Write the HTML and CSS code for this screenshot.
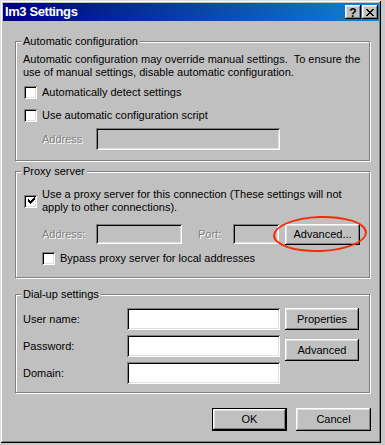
FILE: index.html
```html
<!DOCTYPE html>
<html>
<head>
<meta charset="utf-8">
<title>Im3 Settings</title>
<link rel="stylesheet" href="styles.css">
</head>
<body>
<div class="window">
  <div class="titlebar">
    <span class="title">Im3 Settings</span>
    <div class="title-buttons">
      <span class="tbtn help">?</span>
      <span class="tbtn close">
        <svg width="8" height="7" viewBox="0 0 8 7" shape-rendering="crispEdges"><path d="M0 0h2v1H0zM6 0h2v1H6zM1 1h2v1H1zM5 1h2v1H5zM2 2h4v1H2zM3 3h2v1H3zM2 4h4v1H2zM1 5h2v1H1zM5 5h2v1H5zM0 6h2v1H0zM6 6h2v1H6z" fill="#000"/></svg>
      </span>
    </div>
  </div>
  <div class="content">
    <div class="group g1">
      <span class="group-title">Automatic configuration</span>
      <p class="desc">Automatic configuration may override manual settings.&nbsp; To ensure the<br>use of manual settings, disable automatic configuration.</p>
      <div class="check-row r1"><span class="checkbox"></span><span>Automatically detect settings</span></div>
      <div class="check-row r2"><span class="checkbox"></span><span>Use automatic configuration script</span></div>
      <div class="addr-row">
        <span class="label disabled lbl-addr">Address</span>
        <span class="field off w-auto"></span>
      </div>
    </div>

    <div class="group g2">
      <span class="group-title">Proxy server</span>
      <div class="check-row two-line">
        <span class="checkbox checked"><svg width="9" height="9" viewBox="0 0 9 9" shape-rendering="crispEdges"><path d="M6 1h1v3H6zM5 2h1v3H5zM4 3h1v3H4zM3 4h1v3H3zM2 3h1v3H2zM1 2h1v3H1zM7 0h1v3H7z" fill="#000"/></svg></span>
        <span>Use a proxy server for this connection (These settings will not<br>apply to other connections).</span>
      </div>
      <div class="proxy-row">
        <span class="label disabled lbl-addr">Address:</span>
        <span class="field off w-proxy"></span>
        <span class="label disabled lbl-port">Port:</span>
        <span class="field off w-port"></span>
        <span class="ring-wrap">
          <span class="btn btn-adv">Advanced...</span>
          <span class="ring"></span>
        </span>
      </div>
      <div class="check-row bypass"><span class="checkbox"></span><span>Bypass proxy server for local addresses</span></div>
    </div>

    <div class="group g3">
      <span class="group-title">Dial-up settings</span>
      <div class="dial">
        <div class="dial-fields">
          <div class="dial-row"><span class="label lbl-dial">User name:</span><span class="field w-dial"></span></div>
          <div class="dial-row"><span class="label lbl-dial">Password:</span><span class="field w-dial"></span></div>
          <div class="dial-row"><span class="label lbl-dial">Domain:</span><span class="field w-dial"></span></div>
        </div>
        <div class="dial-buttons">
          <span class="btn btn-side">Properties</span>
          <span class="btn btn-side">Advanced</span>
        </div>
      </div>
    </div>

    <div class="footer">
      <span class="default-wrap"><span class="btn btn-ok">OK</span></span>
      <span class="btn btn-cancel">Cancel</span>
    </div>
  </div>
</div>
</body>
</html>
```

FILE: styles.css
```css
html, body {
  margin: 0;
  padding: 0;
}
body {
  background: #c8c8c8;
  font-family: "Liberation Sans", Arial, sans-serif;
  font-size: 11px;
  line-height: 13px;
  color: #000;
  width: 385px;
  height: 445px;
  overflow: hidden;
}
.window {
  box-sizing: border-box;
  width: 381px;
  height: 443px;
  background: #c0c0c0;
  padding: 3px 2px 3px 3px;
  box-shadow: inset 1px 1px #dfdfdf, inset -1px -1px #000, inset 2px 2px #fff, inset -2px -2px #808080;
}
.titlebar {
  height: 18px;
  box-sizing: border-box;
  padding: 0 1px 0 2px;
  display: flex;
  align-items: center;
  justify-content: space-between;
  background: linear-gradient(90deg, #000080 0%, #1084d0 100%);
}
.title {
  color: #fff;
  font-weight: bold;
  font-size: 13px;
  letter-spacing: -0.4px;
  line-height: 16px;
}
.title-buttons {
  display: flex;
  gap: 1px;
}
.tbtn {
  width: 16px;
  height: 14px;
  box-sizing: border-box;
  background: #c0c0c0;
  box-shadow: inset -1px -1px #000, inset 1px 1px #fff, inset -2px -2px #808080, inset 2px 2px #dfdfdf;
  display: flex;
  align-items: center;
  justify-content: center;
}
.help {
  font-weight: bold;
  font-size: 12px;
  line-height: 12px;
  padding-top: 1px;
}
.close svg {
  display: block;
  margin-left: -1px;
}
.content {
  padding: 20px 9px 0 12px;
  display: flex;
  flex-direction: column;
}
.group {
  position: relative;
  border: 1px solid #808080;
  box-shadow: inset 1px 1px #fff, 1px 1px #fff;
  padding: 0 7px;
}
.group-title {
  position: absolute;
  top: -7px;
  left: 5px;
  padding: 0 2px;
  background: #c0c0c0;
  line-height: 13px;
}
.g1 { padding-top: 11px; padding-bottom: 10px; }
.g2 { margin-top: 10px; padding-top: 16px; padding-bottom: 12px; }
.g3 { margin-top: 16px; padding-top: 13px; padding-bottom: 8px; }
.desc {
  margin: 0;
}
.check-row {
  display: flex;
  align-items: center;
  gap: 5px;
  height: 13px;
}
.check-row .checkbox { margin-left: 1px; }
.r1 { margin-top: 7px; }
.r2 { margin-top: 10px; }
.two-line { height: 26px; }
.checkbox {
  flex: none;
  width: 13px;
  height: 13px;
  box-sizing: border-box;
  background: #fff;
  box-shadow: inset 1px 1px #808080, inset -1px -1px #fff, inset 2px 2px #000, inset -2px -2px #dfdfdf;
  display: flex;
  align-items: center;
  justify-content: center;
}
.checkbox svg { display: block; margin-left: 1px; margin-top: 1px; }
.bypass { margin-top: 7px; margin-left: 18px; }
.label { white-space: nowrap; }
.disabled {
  color: #808080;
  text-shadow: 1px 1px 0 #fff;
}
.addr-row {
  display: flex;
  align-items: center;
  margin-top: 6px;
  padding-left: 19px;
  height: 22px;
}
.lbl-addr { width: 54px; }
.field {
  display: block;
  height: 22px;
  box-sizing: border-box;
  background: #fff;
  box-shadow: inset 1px 1px #808080, inset -1px -1px #fff, inset 2px 2px #000, inset -2px -2px #dfdfdf;
}
.field.off { background: #c0c0c0; }
.w-auto { width: 184px; }
.proxy-row {
  display: flex;
  align-items: center;
  margin-top: 9px;
  padding-left: 19px;
  height: 22px;
}
.w-proxy { width: 86px; height: 20px; }
.lbl-port { width: 35px; margin-left: 16px; }
.w-port { width: 46px; height: 20px; }
.ring-wrap {
  position: relative;
  margin-left: 6px;
  display: flex;
}
.btn {
  display: flex;
  align-items: center;
  justify-content: center;
  box-sizing: border-box;
  background: #c0c0c0;
  box-shadow: inset -1px -1px #000, inset 1px 1px #fff, inset -2px -2px #808080, inset 2px 2px #dfdfdf;
  white-space: nowrap;
}
.btn-adv { width: 75px; height: 21px; }
.ring {
  position: absolute;
  left: -12px;
  top: -8px;
  width: 94px;
  height: 36px;
  box-sizing: border-box;
  border: 2px solid #f52c0c;
  border-radius: 50%;
  transform: rotate(-2deg);
}
.dial {
  display: flex;
  gap: 5px;
}
.dial-fields {
  display: flex;
  flex-direction: column;
  gap: 5px;
}
.dial-row {
  display: flex;
  align-items: center;
}
.lbl-dial { width: 104px; }
.w-dial { width: 153px; }
.dial-buttons {
  display: flex;
  flex-direction: column;
  gap: 9px;
}
.btn-side { width: 74px; height: 22px; }
.footer {
  display: flex;
  justify-content: flex-end;
  gap: 9px;
  margin-top: 15px;
  margin-right: -1px;
}
.default-wrap {
  display: flex;
  border: 1px solid #000;
}
.btn-ok { width: 73px; height: 21px; }
.btn-cancel { width: 75px; height: 23px; }
```
